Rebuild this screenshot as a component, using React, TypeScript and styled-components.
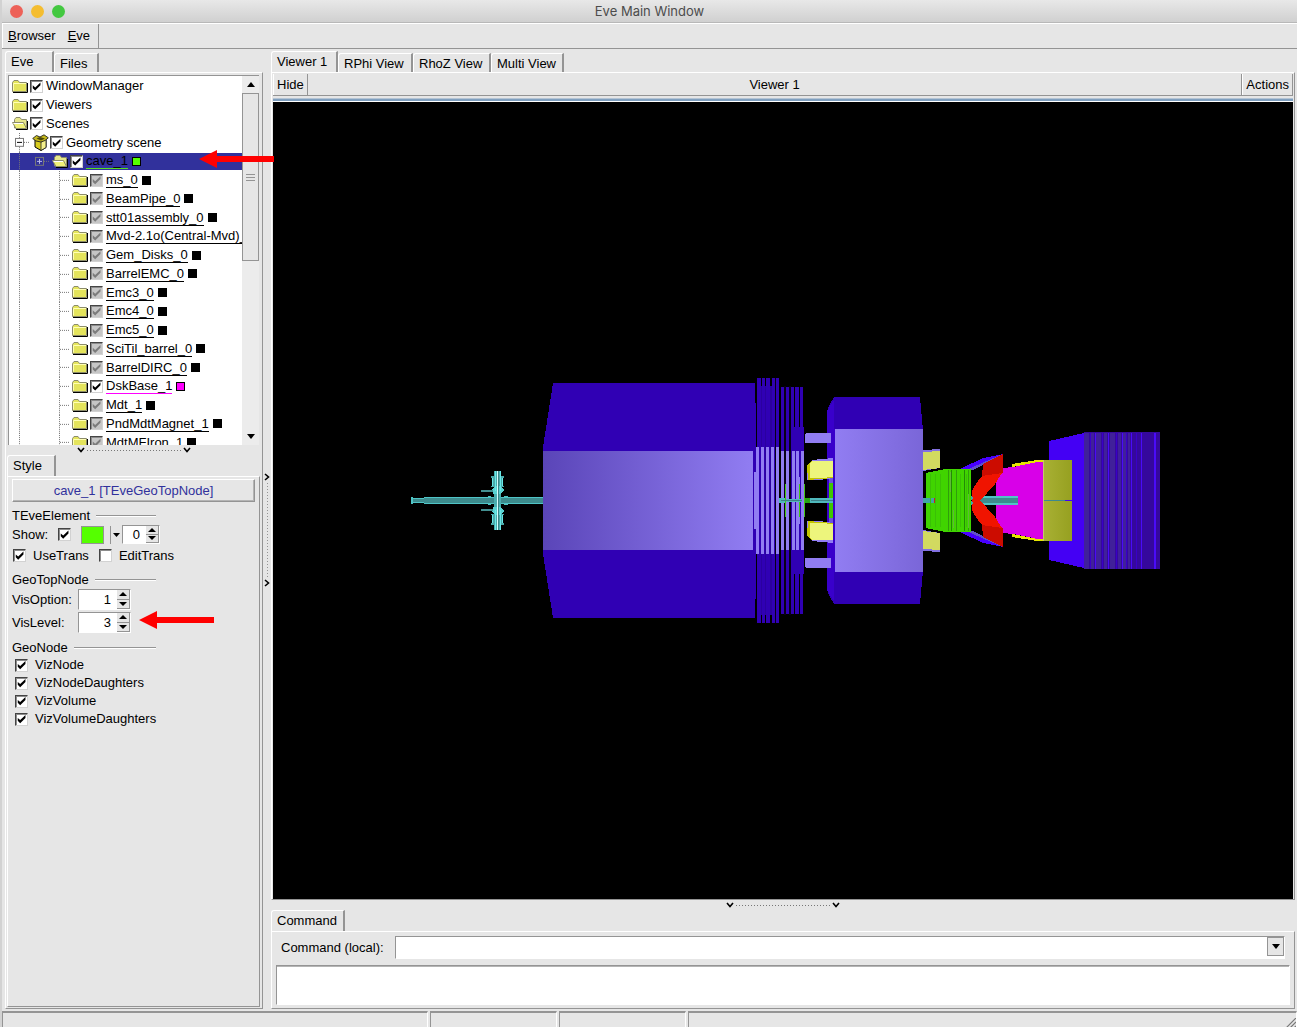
import React, { useState } from "react";
import styled, { createGlobalStyle, css } from "styled-components";

const face = "#e6e6e6";
const shade = "#949494";
const mid = "#b4b4b4";
const navy = "#31319c";

const GlobalStyle = createGlobalStyle`
  *, *::before, *::after { box-sizing: border-box; }
  html, body { margin: 0; background: ${face}; }
  body, button, input, textarea {
    font-family: "Liberation Sans", Arial, Helvetica, sans-serif;
    font-size: 13px;
    line-height: 16px;
    color: #000;
  }
  button { background: none; border: 0; padding: 0; margin: 0; }
  input, textarea { margin: 0; border-radius: 0; }
`;

const Window = styled.div`
  display: flex;
  flex-direction: column;
  min-height: 100vh;
  background: ${face};
  border-left: 2px solid #d2d2d2;
`;

const TitleBar = styled.header`
  display: grid;
  grid-template-columns: 1fr auto 1fr;
  align-items: center;
  height: 23px;
  padding: 0 8px;
  background: linear-gradient(#e8e8e8, #d0d0d0);
  border-bottom: 1px solid #b8b8b8;
`;

const Lights = styled.div`
  display: flex;
  gap: 8px;
`;

const Light = styled.button<{ $color: string }>`
  width: 13px;
  height: 13px;
  border-radius: 50%;
  background: ${(p) => p.$color};
`;

const Title = styled.h1`
  margin: 0;
  font: 400 13px/16px Inter, Roboto, sans-serif;
  color: #4c4c4c;
`;

const MenuBar = styled.nav`
  display: flex;
  height: 26px;
  border-top: 1px solid #fff;
  border-bottom: 1px solid ${shade};
`;

const MenuGroup = styled.div`
  display: flex;
  align-items: center;
  gap: 12px;
  padding: 0 8px 0 5px;
  border-left: 1px solid #fff;
  border-right: 1px solid ${shade};
`;

const MenuButton = styled.button``;

const Body = styled.main`
  display: flex;
  flex: 1;
  min-height: 0;
  padding: 2px 2px 2px 3px;
`;

const LeftColumn = styled.div`
  position: relative;
  display: flex;
  flex-direction: column;
  flex: 0 0 258px;
  min-width: 0;
`;

const RightColumn = styled.div`
  display: flex;
  flex-direction: column;
  flex: 1;
  min-width: 0;
`;

const TabRow = styled.div`
  display: flex;
  align-items: flex-end;
  height: 21px;
`;

const Tab = styled.button<{ $active?: boolean; $width?: number }>`
  height: ${(p) => (p.$active ? 21 : 19)}px;
  min-width: ${(p) => p.$width || 44}px;
  padding: ${(p) => (p.$active ? 0 : 2)}px 5px 0;
  text-align: left;
  border-top: 1px solid #fff;
  border-left: 1px solid #fff;
  border-right: 2px solid ${shade};
  border-top-left-radius: 3px;
`;

const Frame = styled.section<{ $inner?: boolean }>`
  display: flex;
  flex-direction: column;
  flex: 1;
  min-width: 0;
  min-height: 0;
  padding: ${(p) => (p.$inner ? "2px 3px" : "2px 2px 1px 1px")};
  border: 1px solid;
  border-color: #fff ${shade} ${shade} #fff;
`;

const TreeBox = styled.div`
  display: flex;
  flex: 0 0 370px;
  width: 251px;
  margin-left: 1px;
  overflow: hidden;
  background: #fff;
  border-top: 1px solid ${shade};
  border-left: 1px solid ${shade};
`;

const TreeList = styled.ul`
  display: grid;
  grid-auto-rows: 1fr;
  flex: 1;
  min-width: 0;
  height: 376px;
  margin: 0;
  padding: 1px 0 0 1px;
  overflow: hidden;
  list-style: none;
`;

const TreeRow = styled.li<{ $selected?: boolean }>`
  display: flex;
  align-items: center;
  min-height: 0;
  white-space: nowrap;
  ${(p) =>
    p.$selected &&
    css`
      background: linear-gradient(${navy}, ${navy}) 0 1px / 100% 17px no-repeat;
    `}
`;

const Indent = styled.span`
  flex: 0 0 20px;
  align-self: stretch;
  display: grid;
`;

const IconCell = styled.span`
  display: grid;
  place-items: center;
  flex: 0 0 20px;
`;

const Check = styled.input.attrs({ type: "checkbox" })<{ $dim?: boolean }>`
  appearance: none;
  flex: 0 0 13px;
  width: 13px;
  height: 13px;
  background: ${(p) => (p.$dim ? "#c6c6c6" : "#fff")};
  border: 1px solid;
  border-color: #444 #d2d2d2 #d2d2d2 #444;
  box-shadow: inset 1px 1px #8c8c8c;
  &:checked::before {
    content: "";
    display: block;
    width: 11px;
    height: 11px;
    background: ${(p) => (p.$dim ? "#7c7c7c" : "#000")};
    clip-path: polygon(16% 40%, 38% 60%, 86% 14%, 86% 40%, 38% 88%, 16% 66%);
  }
`;

const TreeCheck = styled(Check)`
  margin: 0 2px 0 0;
`;

const TreeLabel = styled.label<{ $line?: string }>`
  margin-left: 1px;
  line-height: 14px;
  ${(p) => p.$line && css`padding-top: 1px; border-bottom: 1px solid ${p.$line};`}
`;

const Swatch = styled.span<{ $color: string }>`
  flex: 0 0 9px;
  height: 9px;
  margin-left: 4px;
  background: ${(p) => p.$color};
  border: 1px solid #000;
`;

const ScrollBar = styled.div`
  display: flex;
  flex-direction: column;
  flex: 0 0 17px;
  background: #ececec;
`;

const ScrollButton = styled.button`
  display: grid;
  place-items: center;
  flex: 0 0 17px;
`;

const ScrollThumb = styled.div`
  display: grid;
  place-items: center;
  height: 168px;
  background: ${face};
  border: 1px solid ${shade};
`;

const ScrollTrack = styled.div`
  flex: 1;
`;

const Grip = styled.span`
  width: 9px;
  height: 7px;
  border: solid ${shade};
  border-width: 1px 0;
  background: linear-gradient(${shade}, ${shade}) 0 2px / 100% 1px no-repeat;
`;

const Splitter = styled.div<{ $vertical?: boolean }>`
  display: flex;
  flex-direction: ${(p) => (p.$vertical ? "column" : "row")};
  align-items: center;
  justify-content: center;
  gap: 2px;
  flex: 0 0 ${(p) => (p.$vertical ? 8 : 10)}px;
`;

const Dots = styled.span<{ $vertical?: boolean }>`
  ${(p) =>
    p.$vertical
      ? css`width: 1px; height: 94px; background: repeating-linear-gradient(${shade} 0 1px, transparent 1px 3px);`
      : css`height: 1px; width: 94px; background: repeating-linear-gradient(90deg, #777 0 1px, transparent 1px 3px);`}
`;

const NameButton = styled.button`
  flex: 0 0 23px;
  margin: 0 1px 6px;
  color: ${navy};
  border: 1px solid;
  border-color: #fff ${shade} ${shade} #fff;
  box-shadow: inset -1px -1px ${mid};
`;

const Group = styled.fieldset`
  display: flex;
  flex-direction: column;
  min-width: 0;
  margin: 0 0 6px;
  padding: 0 1px;
  border: 0;
`;

const GroupTitle = styled.legend`
  display: flex;
  align-items: center;
  gap: 6px;
  width: 144px;
  padding: 0;
  &::after {
    content: "";
    flex: 1;
    height: 2px;
    border-top: 1px solid ${shade};
    border-bottom: 1px solid #fff;
  }
`;

const Row = styled.div<{ $height: number }>`
  display: flex;
  align-items: center;
  height: ${(p) => p.$height}px;
`;

const FieldLabel = styled.label<{ $width: number }>`
  width: ${(p) => p.$width}px;
`;

const OptionLabel = styled.label<{ $indent: number }>`
  display: flex;
  align-items: center;
  gap: 7px;
  padding-left: ${(p) => p.$indent}px;
  margin-right: 10px;
`;

const ColorButton = styled.button`
  width: 23px;
  height: 18px;
  margin-left: 10px;
  background: #55ff00;
  border: 1px solid ${shade};
`;

const DropButton = styled.button`
  display: grid;
  place-items: center;
  width: 12px;
  height: 18px;
  margin-left: 6px;
  border-left: 1px solid ${shade};
`;

const SpinBox = styled.span<{ $width: number; $height: number }>`
  display: flex;
  width: ${(p) => p.$width}px;
  height: ${(p) => p.$height}px;
  border: 1px solid;
  border-color: ${shade} #fff #fff ${shade};
`;

const SpinInput = styled.input`
  flex: 1;
  min-width: 0;
  padding: 0 6px 0 0;
  text-align: right;
  border: 0;
  background: #fff;
`;

const SpinButtons = styled.span`
  display: grid;
  grid-template-rows: 1fr 1fr;
  flex: 0 0 13px;
`;

const SpinButton = styled.button`
  display: grid;
  place-items: center;
  background: ${face};
  border-right: 1px solid ${shade};
  border-bottom: 1px solid ${shade};
`;

const RowArrow = styled.svg`
  display: block;
  margin: -6px 0 0 8px;
`;

const TreeArrow = styled.svg`
  position: absolute;
  left: 194px;
  top: 99px;
  z-index: 2;
`;

const ViewerFrame = styled(Frame)`
  padding: 1px 1px 0;
  min-height: 480px;
`;

const ViewerBar = styled.div`
  display: grid;
  grid-template-columns: auto 1fr auto;
  flex: 0 0 22px;
  border-bottom: 1px solid ${shade};
  margin-bottom: 2px;
`;

const BarButton = styled.button`
  padding: 0 3px;
  border-left: 1px solid #fff;
  border-right: 1px solid ${shade};
`;

const ViewerTitle = styled.div`
  display: grid;
  place-items: center;
  border-right: 1px solid ${shade};
`;

const FocusLine = styled.div`
  flex: 0 0 4px;
  background: #7f9fbf;
  border-top: 1px solid #b4c4d4;
  border-bottom: 1px solid #fff;
`;

const Canvas = styled.div`
  display: flex;
  flex: 1;
  min-height: 0;
  background: #000;
`;

const Scene = styled.svg`
  display: block;
  flex: 1;
  min-width: 0;
  height: auto;
  max-height: 100%;
`;

const CommandPanel = styled(Frame)`
  flex: 0 0 78px;
  padding: 4px 4px 3px;
`;

const CommandRow = styled.div`
  display: flex;
  align-items: center;
  flex: 0 0 23px;
  margin: 0 5px 6px;
`;

const Combo = styled.div`
  display: flex;
  flex: 1;
  height: 23px;
  margin-left: 11px;
  background: #fff;
  border: 1px solid;
  border-color: ${shade} #fff #fff ${shade};
`;

const ComboInput = styled.input`
  flex: 1;
  min-width: 0;
  border: 0;
  padding: 0 4px;
`;

const ComboButton = styled.button`
  display: grid;
  place-items: center;
  width: 17px;
  height: 19px;
  background: ${face};
  border: 1px solid ${shade};
`;

const Output = styled.textarea`
  display: block;
  flex: 1;
  min-height: 0;
  resize: none;
  padding: 2px;
  background: #fff;
  border: 1px solid;
  border-color: ${shade} #fff #fff ${shade};
  box-shadow: inset 0 1px ${mid};
`;

const StatusBar = styled.footer`
  display: grid;
  grid-template-columns: 426px 127px 127px 1fr;
  gap: 2px;
  flex: 0 0 17px;
`;

const StatusCell = styled.div`
  display: flex;
  align-items: flex-end;
  justify-content: flex-end;
  border-top: 2px solid ${shade};
  border-left: 1px solid ${shade};
  border-right: 1px solid #fff;
`;

type Dir = "up" | "down" | "right";

function Triangle({ dir, w = 8, h = 5 }: { dir: Dir; w?: number; h?: number }) {
  return (
    <svg width={w} height={h} viewBox="0 0 8 5" preserveAspectRatio="none" aria-hidden="true">
      <path d={dir === "up" ? "M4 0 8 5H0z" : "M0 0h8L4 5z"} />
    </svg>
  );
}

function Chevron({ dir }: { dir: Dir }) {
  return dir === "right" ? (
    <svg width="6" height="8" viewBox="0 0 6 8" aria-hidden="true">
      <path d="M1 1 4.5 4 1 7" fill="none" stroke="#000" strokeWidth="1.6" />
    </svg>
  ) : (
    <svg width="8" height="6" viewBox="0 0 8 6" aria-hidden="true">
      <path d="M1 1 4 4.5 7 1" fill="none" stroke="#000" strokeWidth="1.6" />
    </svg>
  );
}

function RedArrow() {
  return <path d="M0 9 18 0V6H75V12H18V18z" fill="#f00" />;
}

function ClosedFolder() {
  return (
    <svg width="16" height="13" viewBox="0 0 16 13" aria-hidden="true">
      <path d="M1 12.500H15.500V3" fill="none" stroke="#000" />
      <path d="M.5 11.500v-9l1.500-2h4l1.500 2h7v9z" fill="#e4e45c" stroke="#8c8c6c" />
      <path d="M1.500 3.500h12.500M1.500 3.500v7" fill="none" stroke="#ffffb4" />
    </svg>
  );
}

function OpenFolder() {
  return (
    <svg width="17" height="13" viewBox="0 0 17 13" aria-hidden="true">
      <path d="M2.500 11V2.500L4 .5h4l1.500 2h5V11z" fill="#e6e68c" stroke="#8c8c6c" />
      <path d="M4 12.500H15.500V4" fill="none" stroke="#000" />
      <path d="M.5 5.500H11.500L14.500 11.500H4z" fill="#f0f078" stroke="#8c8c6c" />
      <path d="M1.500 6.500h9.500" stroke="#fff" />
    </svg>
  );
}

function GeometryBox() {
  return (
    <svg width="17" height="17" viewBox="0 0 17 17" aria-hidden="true">
      <path d="M3 5v8l6 3.500 5-3V5" fill="#d8cc20" stroke="#000" />
      <path d="M9 8v8.500l5-3V5z" fill="#f4f08c" stroke="#222" strokeWidth=".8" />
      <path d="M.7 4.500 4.500 1.500 8 3l4-2.200 4.300 3L13 6.500 9 8 4 7z" fill="#c4b81c" stroke="#222" strokeWidth=".9" />
      <path d="M4.500 4.500 8 3l5 1.500L9 6.500z" fill="#4c4808" />
    </svg>
  );
}

function Branch({ kind }: { kind: "line" | "tee" | "plus" | "minus" | "none" }) {
  const dash = { stroke: "#777", strokeDasharray: "1 1" };
  return (
    <svg width="20" height="100%" viewBox="0 0 20 19" preserveAspectRatio="none" aria-hidden="true">
      {kind !== "none" && kind !== "plus" && <path d="M9.500 0V19" {...dash} />}
      {kind !== "none" && kind !== "line" && <path d="M10 9.500H20" {...dash} />}
      {(kind === "plus" || kind === "minus") && (
        <>
          <rect x="5.500" y="5.500" width="8" height="8" fill={kind === "plus" ? navy : "#fff"} stroke="#777" />
          <path d={kind === "plus" ? "M7 9.500h5M9.500 7v5" : "M7 9.500h5"} stroke={kind === "plus" ? "#b8b8ec" : "#000"} />
        </>
      )}
    </svg>
  );
}

type Node = {
  name: string;
  level: number;
  icon?: "open" | "box";
  dim?: boolean;
  selected?: boolean;
  color?: string;
  line?: string;
};

const detector = (name: string): Node => ({ name, level: 3, dim: true, color: "#000", line: "#000" });

const nodes: Node[] = [
  { name: "WindowManager", level: 0 },
  { name: "Viewers", level: 0 },
  { name: "Scenes", level: 0, icon: "open" },
  { name: "Geometry scene", level: 1, icon: "box" },
  { name: "cave_1", level: 2, icon: "open", selected: true, color: "#55ff00", line: "#55e020" },
  ...["ms_0", "BeamPipe_0", "stt01assembly_0", "Mvd-2.1o(Central-Mvd)_0", "Gem_Disks_0", "BarrelEMC_0",
    "Emc3_0", "Emc4_0", "Emc5_0", "SciTil_barrel_0", "BarrelDIRC_0"].map(detector),
  { name: "DskBase_1", level: 3, color: "#ff00ff", line: "#ff00ff" },
  ...["Mdt_1", "PndMdtMagnet_1", "MdtMFIron_1"].map(detector),
];

function branchKind(level: number, cell: number) {
  if (level === 1) return "minus";
  if (level === 2) return cell === 0 ? "line" : "plus";
  return cell === 0 ? "line" : cell === 1 ? "none" : "tee";
}

function TreeNode({ node }: { node: Node }) {
  const id = "node-" + node.name;
  return (
    <TreeRow $selected={node.selected}>
      {Array.from({ length: node.level }, (_, cell) => (
        <Indent key={cell}><Branch kind={branchKind(node.level, cell)} /></Indent>
      ))}
      <IconCell>
        {node.icon === "open" ? <OpenFolder /> : node.icon === "box" ? <GeometryBox /> : <ClosedFolder />}
      </IconCell>
      <TreeCheck id={id} $dim={node.dim} defaultChecked />
      <TreeLabel htmlFor={id} $line={node.line}>{node.name}</TreeLabel>
      {node.color && <Swatch $color={node.color} />}
    </TreeRow>
  );
}

function Spin({ id, label, initial, width, height }: { id: string; label?: string; initial: number; width: number; height: number }) {
  const [value, setValue] = useState(initial);
  return (
    <SpinBox $width={width} $height={height}>
      <SpinInput id={id} aria-label={label} value={value} onChange={(e) => setValue(Number(e.target.value) || 0)} />
      <SpinButtons>
        <SpinButton aria-label="Increase" onClick={() => setValue(value + 1)}><Triangle dir="up" h={4} /></SpinButton>
        <SpinButton aria-label="Decrease" onClick={() => setValue(value - 1)}><Triangle dir="down" h={4} /></SpinButton>
      </SpinButtons>
    </SpinBox>
  );
}

const deep = "#3000b4";
const pale = "#917df2";
const ringBars = [[757, 4], [762, 3], [766, 4], [772, 3], [776, 3]];
const ringLights = [[756, 3], [761, 3], [766, 3], [771, 3], [776, 3]];
const diskBars = [[781, 3], [786, 3], [791, 3], [795, 4], [800, 3]];
const diskLights = [[781, 3], [786, 3], [792, 3], [796, 3], [801, 3]];
const endStripes = [1090, 1095, 1102, 1108, 1116, 1122, 1126, 1131, 1136, 1141, 1154];
const endShades = [[1084, 5], [1091, 3], [1096, 5], [1104, 3], [1110, 5], [1118, 3], [1123, 3], [1128, 2]];

function UpperHalf() {
  return (
    <>
      <path d="M543 501V447L553 383H755L756 421V501z" fill={deep} />
      <path d="M757 501V386H774V501z" fill="#2b009f" />
      {ringBars.map(([x, w]) => <rect key={x} x={x} y="378" width={w} height="123" fill={deep} />)}
      {diskBars.map(([x, w]) => <rect key={x} x={x} y="387" width={w} height="114" fill={deep} />)}
      <path d="M794 427h10V501h-10z" fill={deep} />
      <path d="M827 501V411L830 404 834 397H920L922 420 923 430V501z" fill={deep} />
      <path d="M827 411 834 400V501H827z" fill="#3900cb" />
      <path d="M829 458h4v43h-4z" fill="#6c52dc" />
      <path d="M805 434 807 433H831V443H805z" fill={pale} />
      <path d="M807 466 812 460 833 458V478L820 480H807z" fill={pale} />
      <path d="M807 466 811 461H833V478L820 479 808 480z" fill="#c3c400" />
      <path d="M810 463 812 461H833V477L820 478H810z" fill="#edf57c" />
      <path d="M829 483h4v18h-4z" fill="#40c800" />
      <path d="M923 450 940 449V468L923 471z" fill="#8270e0" />
      <path d="M923 452 940 451V468L923 470z" fill="#d2da60" />
      <path d="M925 501V472L933 469 945 468V501z" fill="#000" />
      <path d="M960 469 983 458 1003 454 972 469z" fill="#4800ff" />
      <path d="M969 469 984 462 1003 454 1001 458 981 466 973 470z" fill="#6050c8" />
      <path d="M926 501V473L945 469H971V501z" fill="#40d400" />
      <path d="M996 501V471L1003 468 1013 467 1038 462H1044V501z" fill="#d800e8" />
      <path d="M1012 464 1037 460H1044V462H1038L1012 467z" fill="#e6e600" />
      <path d="M1049 501V441L1084 433V501z" fill="#4400f4" />
    </>
  );
}

function RedFin() {
  return (
    <>
      <path d="M983 464 1003 454V473L982 477z" fill="#cc0c00" />
      <path d="M982 476 1002 473 995 484 980 501H972V491C975 484 979 480 982 476z" fill="#f01400" />
    </>
  );
}

function FlangeHalf() {
  return (
    <>
      <path d="M494 501V471H501V501z" fill="#4aaeb0" />
      <path d="M491 476h13v2h-1v8h1v1h-13v-1h1v-8h-1z" fill="#4ba9aa" />
      <path d="M492 489l4-3h4l4 4-3 4h-8z" fill="#58d2d2" />
      <path d="M481 490h12v2h-12z" fill="#438f90" />
      <path d="M488 496h3v2h-3zM504 496h4v2h-4z" fill="#4fc4c4" />
      <path d="M492.500 478v8M502.500 478v8M495.500 471v20M500.500 471v20" stroke="#68e8e8" />
    </>
  );
}

function DetectorView() {
  const mirror = "translate(0 1001) scale(1 -1)";
  return (
    <Scene viewBox="273 102 1020 797" role="img" aria-label="Detector geometry" shapeRendering="crispEdges">
      <defs>
        <linearGradient id="barrel"><stop stopColor="#5a45b8" /><stop offset="1" stopColor={pale} /></linearGradient>
        <linearGradient id="magnet"><stop stopColor={pale} /><stop offset="1" stopColor="#7a66d8" /></linearGradient>
        <linearGradient id="olive"><stop stopColor="#a8b034" /><stop offset="1" stopColor="#96a020" /></linearGradient>
      </defs>
      <UpperHalf />
      <g transform={mirror}><UpperHalf /></g>

      <path d="M411 498h13v5h-13z M424 497h119v7H424z" fill="#4fc4c6" />
      <path d="M413 499h11v3h-11z M424 498h119v5H424z" fill="#3d8b8d" />
      <path d="M411 497h2v7h-2z" fill="#4fc4c6" />
      <FlangeHalf />
      <g transform={mirror}><FlangeHalf /></g>
      <path d="M497 471h1v59h-1z" fill="#d4ffff" />
      <path d="M498 471h1v59h-1z" fill="#398385" />

      <path d="M543 451h210v99H543z" fill="url(#barrel)" />
      <path d="M754 472h3v57h-3z" fill={pale} />
      {ringLights.map(([x, w]) => <rect key={x} x={x} y="447" width={w} height="107" fill={pale} />)}
      {diskLights.map(([x, w]) => <rect key={x} x={x} y="451" width={w} height="99" fill={pale} />)}
      <path d="M796 477h4v47h-4z" fill={pale} />
      <path d="M775 378h1v245h-1z M784 386h2v229h-2z M789 386h2v229h-2z" fill="#080018" />
      <path d="M785 484h1v33h-1z M799 484h1v33h-1z M804 484h1v33h-1z" fill="#45c814" />
      <path d="M779 498h6v5h-6z M786 499h3v3h-3z M789 499h13v3h-13z M805 498h28v5h-28z" fill="#4fb8bc" />
      <path d="M781 500h21v1h-21z M811 500h22v1h-22z" fill="#3d7f88" />
      <path d="M805 498h5v5h-5z" fill="#26a514" />
      <path d="M835 429h88v143h-88z" fill="url(#magnet)" />
      <path d="M834 429h1v143h-1z" fill="#3900cb" />

      <path d="M923 498h13v5h-13z" fill="#41a3a8" />
      <path d="M934 498h1v5h-1z" fill="#d02020" />
      {[948, 951, 956, 964, 968].map((x, i) => (
        <path key={x} d={`M${x} 470v61`} stroke={i % 2 ? "#238a06" : "#309e0c"} />
      ))}
      {[930, 935, 940, 960, 966].map((x) => <path key={x} d={`M${x} 474v53`} stroke="#3ac006" />)}
      <path d="M950 472v20M968 494v34M953 510v18" stroke="#60b838" />

      <path d="M972 496h46v9h-46z" fill="#4fc4c6" />
      <path d="M972 498h46v5h-46z" fill="#3d8b8d" />
      <RedFin />
      <g transform={mirror}><RedFin /></g>
      <path d="M971 496 974 498 971 500z M971 501 974 503 971 505z" fill="#3fa5a8" />
      <path d="M1044 460h28v81h-28z" fill="url(#olive)" />
      <path d="M1043 460h1v81h-1z" fill="#c4c86c" />
      <path d="M1044 500h21v1h-21z" fill="#3d8890" />
      <path d="M1065 500h7v1h-7z" fill="#4400f4" />

      <path d="M1084 432h76v137h-76z" fill="#35089c" />
      {endShades.map(([x, w]) => <rect key={x} x={x} y="433" width={w} height="136" fill="#40209a" />)}
      {endStripes.map((x, i) => (
        <rect key={x} x={x} y="433" width={i > 9 ? 2 : 1} height="136" fill={i % 2 || i > 9 ? "#4a0cf8" : "#3a00c8"} />
      ))}
    </Scene>
  );
}

function HorizontalSplitter() {
  return (
    <Splitter role="separator">
      <Chevron dir="down" /><Dots /><Chevron dir="down" />
    </Splitter>
  );
}

export default function App() {
  return (
    <>
      <GlobalStyle />
      <Window>
        <TitleBar>
          <Lights>
            <Light $color="#ed6158" aria-label="Close" />
            <Light $color="#f4bd30" aria-label="Minimize" />
            <Light $color="#43c840" aria-label="Zoom" />
          </Lights>
          <Title>Eve Main Window</Title>
        </TitleBar>
        <MenuBar>
          <MenuGroup>
            <MenuButton><u>B</u>rowser</MenuButton>
            <MenuButton><u>E</u>ve</MenuButton>
          </MenuGroup>
        </MenuBar>
        <Body>
          <LeftColumn>
            <TabRow>
              <Tab $active $width={49}>Eve</Tab>
              <Tab $width={45}>Files</Tab>
            </TabRow>
            <Frame>
              <TreeBox>
                <TreeList>
                  {nodes.map((node) => <TreeNode key={node.name} node={node} />)}
                </TreeList>
                <ScrollBar>
                  <ScrollButton aria-label="Scroll up"><Triangle dir="up" /></ScrollButton>
                  <ScrollThumb><Grip /></ScrollThumb>
                  <ScrollTrack />
                  <ScrollButton aria-label="Scroll down"><Triangle dir="down" /></ScrollButton>
                </ScrollBar>
              </TreeBox>
              <HorizontalSplitter />
              <TabRow>
                <Tab $active $width={49}>Style</Tab>
              </TabRow>
              <Frame $inner>
                <NameButton>cave_1 [TEveGeoTopNode]</NameButton>
                <Group>
                  <GroupTitle>TEveElement</GroupTitle>
                  <Row $height={21}>
                    <FieldLabel htmlFor="show" $width={46}>Show:</FieldLabel>
                    <Check id="show" defaultChecked />
                    <ColorButton aria-label="Color" />
                    <DropButton aria-label="Choose color"><Triangle dir="down" w={7} h={4} /></DropButton>
                    <Spin id="transparency" label="Transparency" initial={0} width={38} height={19} />
                  </Row>
                  <Row $height={21}>
                    <OptionLabel $indent={1}><Check defaultChecked />UseTrans</OptionLabel>
                    <OptionLabel $indent={0}><Check />EditTrans</OptionLabel>
                  </Row>
                </Group>
                <Group>
                  <GroupTitle>GeoTopNode</GroupTitle>
                  <Row $height={23}>
                    <FieldLabel htmlFor="visoption" $width={66}>VisOption:</FieldLabel>
                    <Spin id="visoption" initial={1} width={53} height={21} />
                  </Row>
                  <Row $height={23}>
                    <FieldLabel htmlFor="vislevel" $width={66}>VisLevel:</FieldLabel>
                    <Spin id="vislevel" initial={3} width={53} height={21} />
                    <RowArrow width="76" height="18" aria-hidden="true"><RedArrow /></RowArrow>
                  </Row>
                </Group>
                <Group>
                  <GroupTitle>GeoNode</GroupTitle>
                  {["VizNode", "VizNodeDaughters", "VizVolume", "VizVolumeDaughters"].map((name) => (
                    <Row key={name} $height={18}>
                      <OptionLabel $indent={3}><Check defaultChecked />{name}</OptionLabel>
                    </Row>
                  ))}
                </Group>
              </Frame>
            </Frame>
            <TreeArrow width="76" height="18" aria-hidden="true"><RedArrow /></TreeArrow>
          </LeftColumn>
          <Splitter $vertical role="separator">
            <Chevron dir="right" /><Dots $vertical /><Chevron dir="right" />
          </Splitter>
          <RightColumn>
            <TabRow>
              <Tab $active $width={67}>Viewer 1</Tab>
              <Tab $width={75}>RPhi View</Tab>
              <Tab $width={78}>RhoZ View</Tab>
              <Tab $width={73}>Multi View</Tab>
            </TabRow>
            <ViewerFrame>
              <ViewerBar>
                <BarButton>Hide</BarButton>
                <ViewerTitle>Viewer 1</ViewerTitle>
                <BarButton>Actions</BarButton>
              </ViewerBar>
              <FocusLine />
              <Canvas><DetectorView /></Canvas>
            </ViewerFrame>
            <HorizontalSplitter />
            <TabRow>
              <Tab $active $width={74}>Command</Tab>
            </TabRow>
            <CommandPanel>
              <CommandRow>
                <label htmlFor="command">Command (local):</label>
                <Combo>
                  <ComboInput id="command" />
                  <ComboButton aria-label="Command history"><Triangle dir="down" /></ComboButton>
                </Combo>
              </CommandRow>
              <Output aria-label="Command output" />
            </CommandPanel>
          </RightColumn>
        </Body>
        <StatusBar>
          <StatusCell />
          <StatusCell />
          <StatusCell />
          <StatusCell>
            <svg width="10" height="10" viewBox="0 0 10 10" aria-hidden="true">
              <path d="M0 10 10 0M4 10 10 4M8 10 10 8" stroke="#777" strokeWidth="1.200" />
            </svg>
          </StatusCell>
        </StatusBar>
      </Window>
    </>
  );
}
